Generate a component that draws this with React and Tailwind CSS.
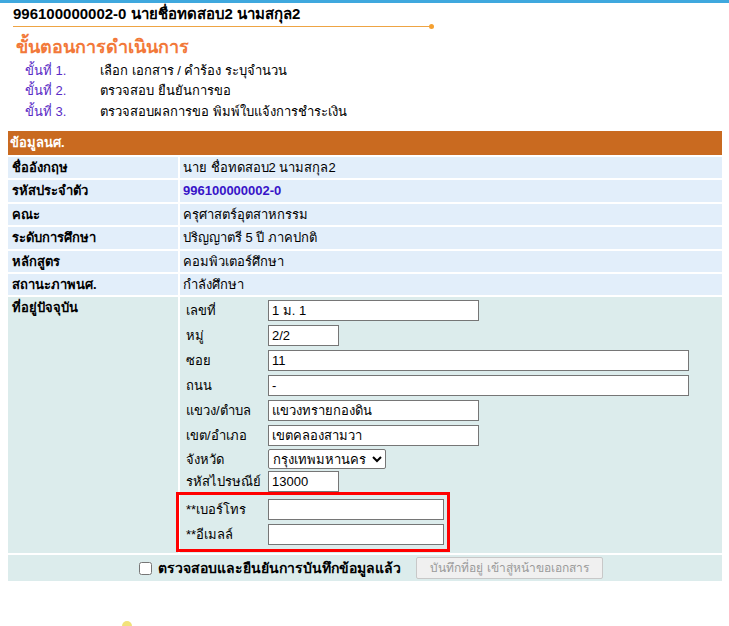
import React from "react";

const rows = [
  { label: "ชื่ออังกฤษ", value: "นาย ชื่อทดสอบ2 นามสกุล2" },
  { label: "รหัสประจำตัว", value: "996100000002-0", strong: true },
  { label: "คณะ", value: "ครุศาสตร์อุตสาหกรรม" },
  { label: "ระดับการศึกษา", value: "ปริญญาตรี 5 ปี ภาคปกติ" },
  { label: "หลักสูตร", value: "คอมพิวเตอร์ศึกษา" },
  { label: "สถานะภาพนศ.", value: "กำลังศึกษา" },
];

const steps = [
  ["ขั้นที่ 1.", "เลือก เอกสาร / คำร้อง ระบุจำนวน"],
  ["ขั้นที่ 2.", "ตรวจสอบ ยืนยันการขอ"],
  ["ขั้นที่ 3.", "ตรวจสอบผลการขอ พิมพ์ใบแจ้งการชำระเงิน"],
];

function Field({ label, value, width }) {
  return (
    <div className="flex items-center h-[25px]">
      <span className="w-[82px] shrink-0">{label}</span>
      <input
        type="text"
        defaultValue={value}
        className={`${width} h-[21px] border border-[#767676] bg-white px-[3px] text-[13px] text-black outline-none`}
      />
    </div>
  );
}

export default function App() {
  return (
    <div className="h-[626px] overflow-hidden bg-white font-['Tahoma','Liberation_Sans',sans-serif] text-[13px] text-black">
      <div className="h-[3px] bg-[#3fa8de]" />
      <div className="pl-[13px] pt-[1px] text-[15px] font-bold leading-[20px]">
        996100000002-0 นายชื่อทดสอบ2 นามสกุล2
      </div>
      <div className="ml-[13px] flex w-[421px] items-center">
        <div className="h-px flex-1 bg-[#eea444]" />
        <div className="h-[5px] w-[5px] rounded-full bg-[#f5a030]" />
      </div>
      <div className="pl-[16px] pt-[7px] text-[18px] font-bold leading-[22px] text-[#f2793a]">
        ขั้นตอนการดำเนินการ
      </div>
      <div className="pl-[25px] pt-[2px]">
        {steps.map(([k, v]) => (
          <div key={k} className="flex h-[20.5px] items-center">
            <span className="w-[75px] text-[#5a2cc6]">{k}</span>
            <span>{v}</span>
          </div>
        ))}
      </div>

      <div className="mx-[8px] mt-[9px] flex w-[714px] flex-col gap-[2px]">
        <div className="flex h-[24.5px] items-center bg-[#c96a20] px-[2px] font-bold text-white">
          ข้อมูลนศ.
        </div>
        {rows.map((r) => (
          <div key={r.label} className="flex h-[21.4px] gap-[2px]">
            <div className="flex w-[170px] items-center bg-[#e2eefa] pl-[4px] font-bold">
              {r.label}
            </div>
            <div
              className={`flex flex-1 items-center bg-[#e2eefa] pl-[3px] ${
                r.strong ? "font-bold text-[#3814c8]" : ""
              }`}
            >
              {r.value}
            </div>
          </div>
        ))}

        <div className="flex gap-[2px]">
          <div className="w-[170px] bg-[#dcecec] pl-[4px] pt-[1px] font-bold">
            ที่อยู่ปัจจุบัน
          </div>
          <div className="flex-1 bg-[#dcecec] pl-[6px] pt-[1px] pb-[1px]">
            <Field label="เลขที่" value="1 ม. 1" width="w-[211px]" />
            <Field label="หมู่" value="2/2" width="w-[71px]" />
            <Field label="ซอย" value="11" width="w-[421px]" />
            <Field label="ถนน" value="-" width="w-[421px]" />
            <Field label="แขวง/ตำบล" value="แขวงทรายกองดิน" width="w-[211px]" />
            <Field label="เขต/อำเภอ" value="เขตคลองสามวา" width="w-[211px]" />
            <div className="flex h-[22px] items-center">
              <span className="w-[82px] shrink-0">จังหวัด</span>
              <select
                defaultValue="กรุงเทพมหานคร"
                className="h-[20px] w-[118px] rounded-[2px] border border-[#767676] bg-white text-[13px]"
              >
                <option>กรุงเทพมหานคร</option>
              </select>
            </div>
            <div className="flex h-[22px] items-center">
              <span className="w-[82px] shrink-0">รหัสไปรษณีย์</span>
              <input
                type="text"
                defaultValue="13000"
                className="h-[21px] w-[71px] border border-[#767676] bg-white px-[3px] text-[13px] outline-none"
              />
            </div>
            <div className="ml-[-10px] w-[274px] border-[3px] border-[#ff0000] py-[2px] pl-[7px]">
              <Field label="**เบอร์โทร" value="" width="w-[176px]" />
              <Field label="**อีเมลล์" value="" width="w-[176px]" />
            </div>
          </div>
        </div>

        <div className="flex h-[26px] items-center justify-center gap-[6px] bg-[#dcecec] pl-[12px]">
          <input type="checkbox" className="h-[13px] w-[13px]" />
          <span className="text-[14px] font-bold">ตรวจสอบและยืนยันการบันทึกข้อมูลแล้ว</span>
          <button
            disabled
            className="ml-[9px] h-[22px] rounded-[2px] border border-[#c8c8c8] bg-[#f0f0f0] px-[13px] text-[12px] text-[#9a9a9a]"
          >
            บันทึกที่อยู่ เข้าสู่หน้าขอเอกสาร
          </button>
        </div>
      </div>

      <div className="mt-[40px] pl-[122px]">
        <div className="h-[10px] w-[10px] rounded-full bg-[#f2e27a]" />
      </div>
    </div>
  );
}
